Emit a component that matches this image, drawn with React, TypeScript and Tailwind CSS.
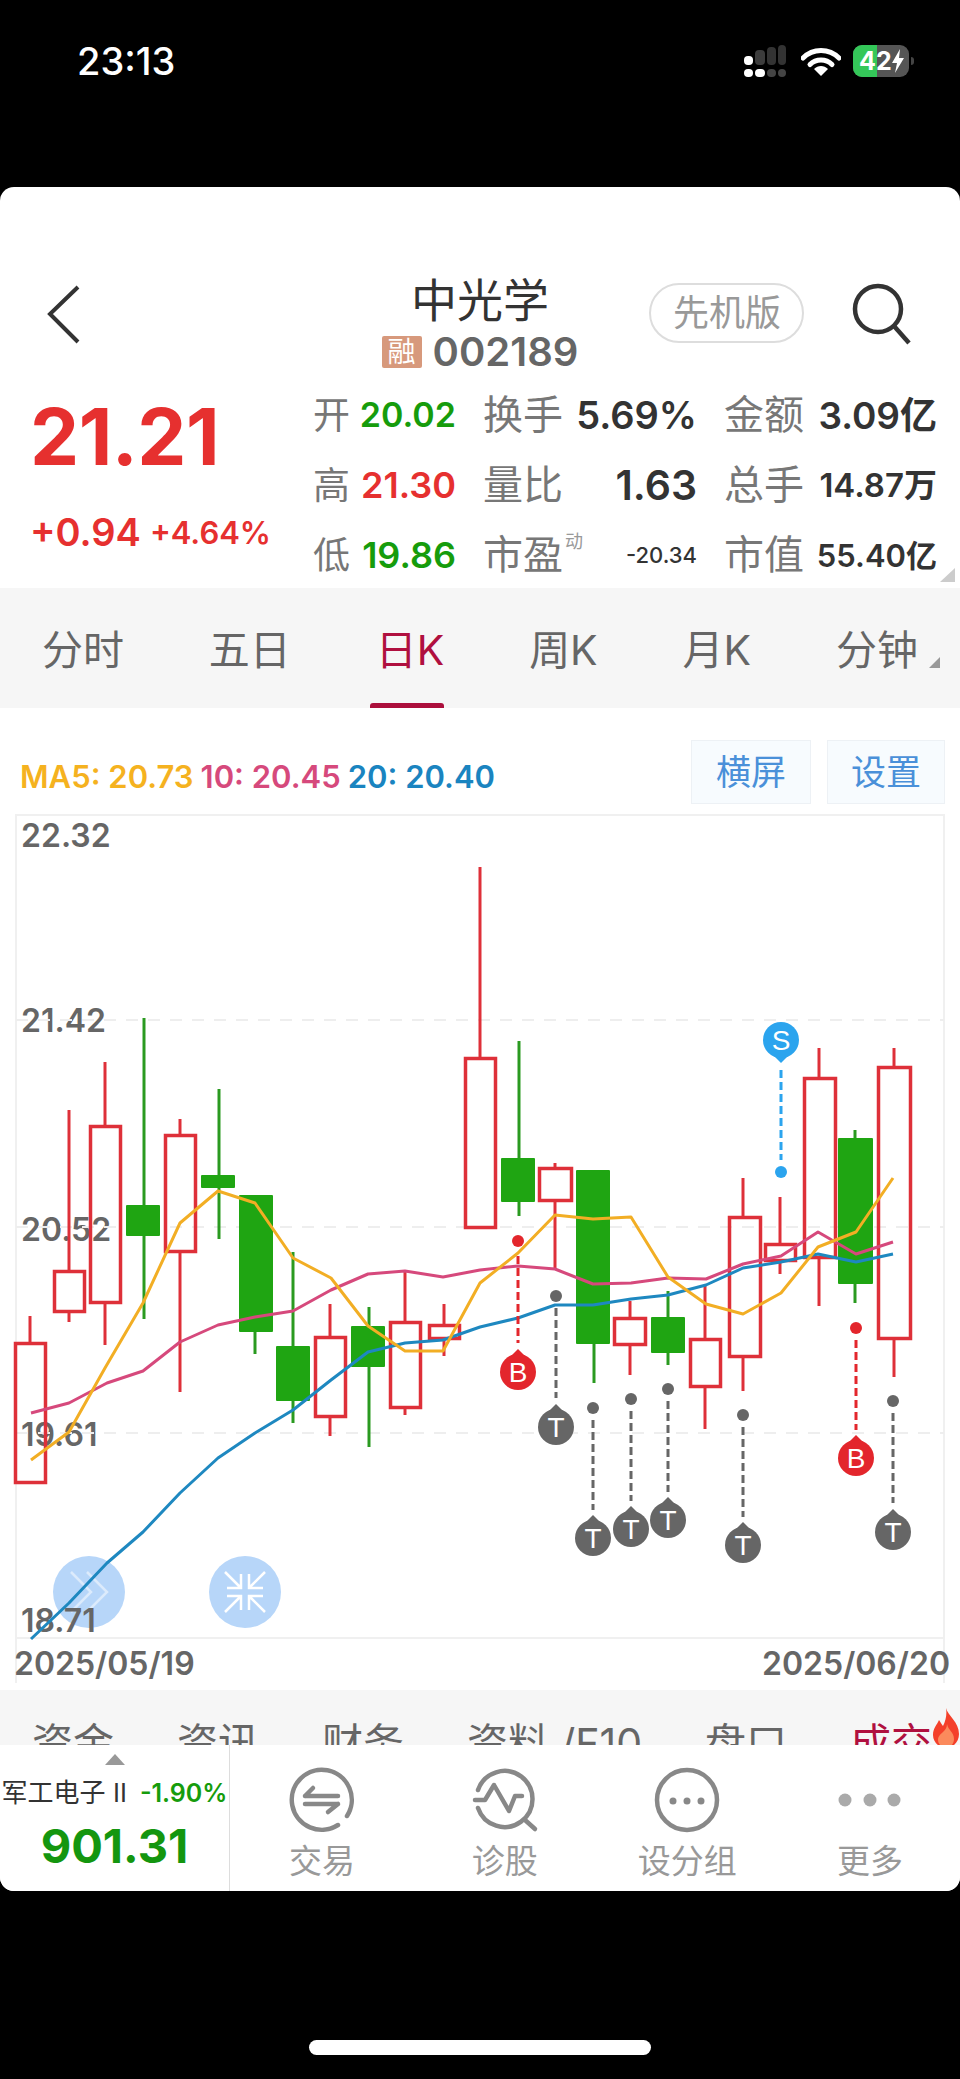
type Candle = [number, number, number, number, number, number, number, 0 | 1];
type Pin = { x: number; dot: number; from: number; to: number; c: number; label: string; color: string };

// cx, wick top, wick bottom, body left, body right, body top, body bottom, 1 = up (hollow red)
const candles: Candle[] = [
  [30, 1316, 1484, 14, 47, 1342, 1484, 1],
  [69, 1110, 1322, 53, 86, 1270, 1313, 1],
  [105, 1062, 1345, 89, 122, 1125, 1304, 1],
  [144, 1018, 1319, 126, 160, 1205, 1236, 0],
  [180, 1119, 1392, 164, 197, 1134, 1253, 1],
  [219, 1089, 1239, 201, 235, 1175, 1188, 0],
  [255, 1195, 1354, 239, 273, 1195, 1332, 0],
  [293, 1252, 1423, 276, 310, 1346, 1401, 0],
  [330, 1304, 1436, 314, 347, 1336, 1418, 1],
  [369, 1307, 1447, 351, 385, 1326, 1367, 0],
  [405, 1271, 1415, 389, 422, 1321, 1409, 1],
  [444, 1304, 1356, 428, 461, 1324, 1340, 1],
  [480, 867, 1229, 464, 497, 1057, 1229, 1],
  [519, 1041, 1216, 501, 535, 1158, 1202, 0],
  [555, 1163, 1268, 538, 573, 1167, 1202, 1],
  [594, 1170, 1383, 576, 610, 1170, 1344, 0],
  [630, 1301, 1375, 613, 647, 1317, 1346, 1],
  [668, 1291, 1365, 651, 685, 1317, 1353, 0],
  [705, 1285, 1429, 689, 722, 1338, 1388, 1],
  [743, 1178, 1391, 728, 762, 1216, 1358, 1],
  [780, 1197, 1274, 764, 797, 1243, 1262, 1],
  [819, 1048, 1306, 803, 837, 1077, 1259, 1],
  [855, 1130, 1303, 838, 873, 1138, 1284, 0],
  [894, 1048, 1377, 877, 912, 1066, 1340, 1],
];

const ma5 = "31,1460 69,1432 105,1368 143,1303 180,1223 218,1191 255,1203 293,1258 331,1278 368,1326 405,1351 443,1351 480,1283 518,1253 555,1215 593,1219 631,1217 668,1277 706,1304 743,1314 781,1293 818,1247 856,1232 893,1178";
const ma10 = "31,1413 69,1403 107,1383 143,1371 180,1342 218,1325 255,1317 293,1311 331,1290 368,1274 405,1271 443,1277 480,1270 518,1266 555,1269 593,1284 631,1283 668,1278 706,1279 743,1264 781,1256 818,1232 856,1254 893,1242";
const ma20 = "31,1639 69,1603 107,1563 143,1532 180,1493 218,1458 255,1433 293,1410 331,1380 368,1352 405,1343 443,1340 480,1327 518,1318 555,1305 593,1305 631,1299 668,1295 706,1285 743,1268 781,1262 818,1254 856,1262 893,1254";

const pins: Pin[] = [
  { x: 518, dot: 1241, from: 1256, to: 1343, c: 1372, label: "B", color: "#e3262c" },
  { x: 556, dot: 1296, from: 1308, to: 1398, c: 1427, label: "T", color: "#666666" },
  { x: 593, dot: 1408, from: 1420, to: 1510, c: 1538, label: "T", color: "#666666" },
  { x: 631, dot: 1399, from: 1411, to: 1501, c: 1529, label: "T", color: "#666666" },
  { x: 668, dot: 1389, from: 1401, to: 1492, c: 1520, label: "T", color: "#666666" },
  { x: 743, dot: 1415, from: 1427, to: 1517, c: 1545, label: "T", color: "#666666" },
  { x: 856, dot: 1328, from: 1340, to: 1430, c: 1458, label: "B", color: "#e3262c" },
  { x: 893, dot: 1401, from: 1413, to: 1503, c: 1532, label: "T", color: "#666666" },
];

const axisLabels = [
  { text: "22.32", cls: "top-[4px]" },
  { text: "21.42", cls: "top-[189px]" },
  { text: "20.52", cls: "top-[398px]" },
  { text: "19.61", cls: "top-[603px]" },
  { text: "18.71", cls: "top-[789px]" },
];

const timeTabs = ["分时", "五日", "日K", "周K", "月K", "分钟"];

function StatusBar() {
  return (
    <div className="flex h-[187px] shrink-0 items-start justify-between pl-[77px] pr-[46px] pt-[45px]">
      <span className="text-[38px] leading-[33px] font-medium text-white">23:13</span>
      <div className="flex items-start">
        <svg width="46" height="34" viewBox="0 0 46 34" className="mr-[11px]">
          <rect x="0" y="11" width="9" height="9" rx="4" fill="#fff" />
          <rect x="11" y="5" width="10" height="15" rx="4" fill="#3c3c3c" />
          <rect x="23" y="2" width="9" height="18" rx="4" fill="#333" />
          <rect x="34" y="0" width="8" height="20" rx="4" fill="#333" />
          <rect x="0" y="24" width="9" height="8" rx="4" fill="#fff" />
          <rect x="11" y="24" width="10" height="8" rx="4" fill="#fff" />
          <rect x="23" y="24" width="9" height="8" rx="4" fill="#444" />
          <rect x="34" y="24" width="8" height="8" rx="4" fill="#444" />
        </svg>
        <svg width="40" height="30" viewBox="0 0 40 30" className="mr-[12px] mt-[2px]">
          <path d="M2 11 C12 1 28 1 38 11" fill="none" stroke="#fff" strokeWidth="5" strokeLinecap="round" />
          <path d="M9 17.5 C15 11.5 25 11.5 31 17.5" fill="none" stroke="#fff" strokeWidth="5" strokeLinecap="round" />
          <path d="M13 22 C17 18 23 18 27 22 L20 29 Z" fill="#fff" />
        </svg>
        <div className="relative flex h-[32px] w-[56px] overflow-hidden rounded-[9px] bg-[#555555]">
          <div className="h-full w-[24px] bg-[#34c759]" />
          <span className="absolute left-[6px] top-[3px] text-[25px] leading-[26px] font-bold text-white">42</span>
          <svg width="14" height="24" viewBox="0 0 14 24" className="absolute right-[4px] top-[4px]">
            <path d="M9 0 L1 14 H6 L4 24 L13 9 H8 Z" fill="#fff" />
          </svg>
        </div>
        <div className="ml-[2px] mt-[12px] h-[8px] w-[3px] rounded-r-sm bg-[#444]" />
      </div>
    </div>
  );
}

function Header() {
  return (
    <div className="grid h-[193px] shrink-0 grid-cols-[1fr_auto_1fr] pt-[90px]">
      <div className="pl-[47px] pt-[8px]">
        <svg width="34" height="60" viewBox="0 0 34 60">
          <path d="M31 2 L3 29 L31 57" fill="none" stroke="#333" strokeWidth="4" />
        </svg>
      </div>
      <div className="flex flex-col items-center">
        <span className="text-[46px] leading-[46px] text-[#333333]">中光学</span>
        <div className="mt-[13px] flex items-center gap-[11px]">
          <span className="flex h-[32px] w-[40px] items-center justify-center rounded-[2px] bg-[#d7997c] text-[28px] leading-none text-white">融</span>
          <span className="text-[40px] leading-[32px] font-semibold text-[#666666]">002189</span>
        </div>
      </div>
      <div className="flex items-start pl-[71px] pt-[6px]">
        <span className="flex h-[60px] w-[155px] items-center justify-center rounded-full border-2 border-[#dddddd] text-[36px] leading-none text-[#999999]">先机版</span>
        <svg width="62" height="62" viewBox="0 0 62 62" className="ml-[47px] shrink-0">
          <circle cx="27" cy="26" r="23" fill="none" stroke="#333" strokeWidth="4.5" />
          <path d="M43 43 L58 60" fill="none" stroke="#333" strokeWidth="4.5" />
        </svg>
      </div>
    </div>
  );
}

function Stat({ label, value, cls, sup }: { label: string; value: string; cls: string; sup?: boolean }) {
  return (
    <div className="flex items-center justify-between">
      <span className="relative text-[40px] leading-none text-[#777777]">
        {label}
        {sup && <span className="absolute left-[82px] top-[-2px] text-[18px] leading-none text-[#999999]">动</span>}
      </span>
      <span className={cls}>{value}</span>
    </div>
  );
}

function Quote() {
  const base = "leading-none font-semibold";
  return (
    <div className="relative flex h-[208px] shrink-0">
      <div className="w-[313px] shrink-0 pl-[30px] pt-[26px]">
        <div className="text-[78px] leading-[62px] font-bold tracking-[-0.5px] text-[#e6302f]">21.21</div>
        <div className="mt-[45px] flex items-center gap-[9px] font-semibold text-[#e6302f]">
          <span className="text-[38px] leading-none">+0.94</span>
          <span className="text-[31px] leading-none">+4.64%</span>
        </div>
      </div>
      <div className="grid h-[210px] w-[625px] grid-cols-[143px_214px_213px] grid-rows-3 gap-x-[27px]">
        <div className="flex items-center justify-between">
          <span className="text-[37px] leading-none text-[#777777]">开</span>
          <span className={`${base} text-[34px] text-[#169c0c]`}>20.02</span>
        </div>
        <Stat label="换手" value="5.69%" cls={`${base} text-[38px] text-[#333333]`} />
        <Stat label="金额" value="3.09亿" cls={`${base} text-[37px] text-[#333333]`} />
        <div className="flex items-center justify-between">
          <span className="text-[37px] leading-none text-[#777777]">高</span>
          <span className={`${base} text-[36px] text-[#e6302f]`}>21.30</span>
        </div>
        <Stat label="量比" value="1.63" cls={`${base} text-[41px] text-[#333333]`} />
        <Stat label="总手" value="14.87万" cls={`${base} text-[33px] text-[#333333]`} />
        <div className="flex items-center justify-between">
          <span className="text-[37px] leading-none text-[#777777]">低</span>
          <span className={`${base} text-[36px] text-[#169c0c]`}>19.86</span>
        </div>
        <Stat label="市盈" value="-20.34" sup cls="text-[22px] leading-none font-medium text-[#333333]" />
        <Stat label="市值" value="55.40亿" cls={`${base} text-[31px] text-[#333333]`} />
      </div>
      <div className="absolute bottom-[6px] right-[5px] h-0 w-0 border-b-[14px] border-l-[15px] border-b-[#cccccc] border-l-transparent" />
    </div>
  );
}

function TimeTabs() {
  return (
    <div className="relative flex h-[120px] shrink-0 items-start justify-between bg-[#f6f6f6] px-[42px] pt-[42px]">
      {timeTabs.map((t) => (
        <span key={t} className={t === "日K" ? "relative text-[41px] leading-none text-[#b0103f]" : "text-[41px] leading-none text-[#666666]"}>
          {t}
          {t === "日K" && <span className="absolute left-[-6px] top-[73px] h-[5px] w-[74px] rounded-t-[3px] bg-[#ac0f3c]" />}
        </span>
      ))}
      <div className="absolute right-[20px] top-[69px] h-0 w-0 border-b-[11px] border-l-[11px] border-b-[#999999] border-l-transparent" />
    </div>
  );
}

function Legend() {
  return (
    <div className="mt-[32px] flex h-[64px] shrink-0 items-center justify-between pl-[20px] pr-[15px]">
      <div className="flex gap-[7px] pt-[8px] text-[31px] leading-none font-semibold">
        <span className="text-[#f5b21f]">MA5: 20.73</span>
        <span className="text-[#d6497c]">10: 20.45</span>
        <span className="text-[#1a84c0]">20: 20.40</span>
      </div>
      <div className="flex gap-[16px]">
        <span className="flex h-[64px] w-[120px] items-center justify-center border border-[#edf1f5] bg-[#f7fbfe] text-[35px] leading-none text-[#4a90d9]">横屏</span>
        <span className="flex h-[64px] w-[118px] items-center justify-center border border-[#edf1f5] bg-[#f7fbfe] text-[35px] leading-none text-[#4a90d9]">设置</span>
      </div>
    </div>
  );
}

function CandleShape({ c }: { c: Candle }) {
  const [cx, wt, wb, l, r, t, b, up] = c;
  const color = up ? "#de3039" : "#1fa512";
  return (
    <g>
      {wt < t && <line x1={cx} x2={cx} y1={wt} y2={t} stroke={up ? color : "#2a9a20"} strokeWidth="3" />}
      {wb > b && <line x1={cx} x2={cx} y1={b} y2={wb} stroke={up ? color : "#2a9a20"} strokeWidth="3" />}
      {up ? (
        <rect x={l + 1.5} y={t + 1.5} width={r - l - 3} height={b - t - 3} fill="none" stroke={color} strokeWidth="3.5" />
      ) : (
        <rect x={l} y={t} width={r - l} height={b - t} rx="1" fill={color} />
      )}
    </g>
  );
}

function PinShape({ p }: { p: Pin }) {
  return (
    <g>
      <circle cx={p.x} cy={p.dot} r="6" fill={p.color} />
      <line x1={p.x} x2={p.x} y1={p.from} y2={p.to} stroke={p.color} strokeWidth="3" strokeDasharray="8 4" />
      <path d={`M${p.x - 7} ${p.c - 16} L${p.x} ${p.c - 23} L${p.x + 7} ${p.c - 16} Z`} fill={p.color} />
      <circle cx={p.x} cy={p.c} r="18" fill={p.color} />
      <text x={p.x} y={p.c + 10} textAnchor="middle" fontSize="28" fill="#fff" fontFamily="Liberation Sans, sans-serif">{p.label}</text>
    </g>
  );
}

function Chart() {
  return (
    <div className="relative ml-[15px] mt-[10px] h-[869px] w-[930px] shrink-0 border-x-2 border-t-2 border-[#f0f0f0]">
      <div className="relative h-[823px] border-b-2 border-[#f0f0f0]">
        <div className="absolute left-[36px] top-[740px] flex h-[72px] w-[72px] items-center justify-center rounded-full bg-[#b7d6f9]">
          <svg width="48" height="48" viewBox="0 0 48 48">
            <path d="M6 4 L26 24 L6 44 M22 4 L42 24 L22 44" fill="none" stroke="#dcebfc" strokeWidth="2.5" />
          </svg>
        </div>
        <div className="absolute left-[192px] top-[740px] flex h-[72px] w-[72px] items-center justify-center rounded-full bg-[#b7d6f9]">
          <svg width="48" height="48" viewBox="0 0 48 48" stroke="#fff" strokeWidth="2.5" fill="none">
            <path d="M4 4 L20 20 M20 6 V20 H6 M44 4 L28 20 M28 6 V20 H42 M4 44 L20 28 M20 42 V28 H6 M44 44 L28 28 M28 42 V28 H42" />
          </svg>
        </div>
        {axisLabels.map((a) => (
          <span key={a.text} className={`absolute left-[4px] text-[32px] leading-none font-semibold text-[#666666] ${a.cls}`}>{a.text}</span>
        ))}
      </div>
      <div className="ml-[-3px] mr-[-7px] flex justify-between pt-[7px] text-[32px] leading-[36px] font-semibold text-[#666666]">
        <span>2025/05/19</span>
        <span>2025/06/20</span>
      </div>
      <svg className="absolute left-[-17px] top-[-2px]" width="960" height="869" viewBox="0 814 960 869" fill="none">
        {[1020, 1227, 1433].map((y) => (
          <line key={y} x1="16" x2="944" y1={y} y2={y} stroke="#eeeeee" strokeWidth="2" strokeDasharray="12 10" />
        ))}
        {candles.map((c) => (
          <CandleShape key={c[0]} c={c} />
        ))}
        <polyline points={ma20} stroke="#1e88c0" strokeWidth="3" strokeLinejoin="round" />
        <polyline points={ma10} stroke="#d6497c" strokeWidth="3" strokeLinejoin="round" />
        <polyline points={ma5} stroke="#f2ae24" strokeWidth="3" strokeLinejoin="round" />
        {pins.map((p) => (
          <PinShape key={p.x} p={p} />
        ))}
        <circle cx="781" cy="1172" r="6" fill="#2ba4ee" />
        <line x1="781" x2="781" y1="1070" y2="1160" stroke="#2ba4ee" strokeWidth="3" strokeDasharray="8 4" />
        <path d="M774 1056 L781 1063 L788 1056 Z" fill="#2ba4ee" />
        <circle cx="781" cy="1040" r="18" fill="#2ba4ee" />
        <text x="781" y="1050" textAnchor="middle" fontSize="28" fill="#fff" fontFamily="Liberation Sans, sans-serif">S</text>
      </svg>
    </div>
  );
}

function InfoTabs() {
  return (
    <div className="mt-[7px] flex h-[55px] shrink-0 justify-between overflow-hidden bg-[#f6f6f6] pl-[32px] pt-[30px] text-[41px] leading-[46px] text-[#666666]">
      <span>资金</span>
      <span>资讯</span>
      <span>财务</span>
      <span>资料 /F10</span>
      <span>盘口</span>
      <span className="flex items-start text-[#b0103f]">
        成交
        <svg width="28" height="40" viewBox="0 0 28 40" className="mt-[-12px] shrink-0">
          <path d="M14 0 C16 8 27 14 27 26 C27 34 21 40 14 40 C7 40 1 34 1 27 C1 20 5 17 7 12 C9 15 10 17 11 18 C14 12 15 6 14 0Z" fill="#f4402a" />
          <path d="M15 16 C16 22 22 24 22 31 C22 36 18 40 14 40 C10 40 6 36 6 32 C6 28 9 26 11 24 C13 22 15 20 15 16Z" fill="#fb8a5c" />
        </svg>
      </span>
    </div>
  );
}

function NavItem({ label, children }: { label: string; children: React.ReactNode }) {
  return (
    <div className="flex w-[138px] flex-col items-center">
      <div className="flex h-[68px] w-[72px] items-center justify-center">{children}</div>
      <span className="mt-[11px] text-[33px] leading-none text-[#999999]">{label}</span>
    </div>
  );
}

function BottomBar() {
  return (
    <div className="flex h-[146px] shrink-0 overflow-hidden rounded-b-[14px] bg-white">
      <div className="flex w-[230px] shrink-0 flex-col items-center border-r border-[#dddddd] pt-[9px]">
        <div className="h-0 w-0 border-x-[10px] border-b-[11px] border-x-transparent border-b-[#999999]" />
        <div className="mt-[15px] flex items-center whitespace-nowrap text-[26px] leading-none">
          <span className="text-[#333333]">军工电子 Ⅱ</span>
          <span className="ml-[13px] text-[25px] font-semibold text-[#169c0c]">-1.90%</span>
        </div>
        <div className="mt-[18px] text-[47px] leading-[44px] font-bold text-[#14960f]">901.31</div>
      </div>
      <div className="flex flex-1 items-start justify-between pl-[23px] pr-[21px] pt-[21px]">
        <NavItem label="交易">
          <svg width="68" height="68" viewBox="0 0 68 68" fill="none" stroke="#888" strokeWidth="4.5" strokeLinecap="round">
            <path d="M59 50 A30 30 0 1 0 50 59" />
            <path d="M17 30 H50 M17 30 L25 22 M17 38 H50 M50 38 L40 46" />
          </svg>
        </NavItem>
        <NavItem label="诊股">
          <svg width="68" height="68" viewBox="0 0 68 68" fill="none" stroke="#888" strokeWidth="4.5" strokeLinecap="round" strokeLinejoin="round">
            <path d="M7 24 A28 28 0 1 1 7 42" />
            <path d="M4 34 H14 L23 19 L38 45 L44 30 H51" />
            <path d="M54 54 L64 63" />
          </svg>
        </NavItem>
        <NavItem label="设分组">
          <svg width="68" height="68" viewBox="0 0 68 68" fill="none">
            <circle cx="34" cy="34" r="30" stroke="#888" strokeWidth="4.5" />
            <circle cx="20" cy="35" r="3.5" fill="#888" />
            <circle cx="34" cy="35" r="3.5" fill="#888" />
            <circle cx="48" cy="35" r="3.5" fill="#888" />
          </svg>
        </NavItem>
        <NavItem label="更多">
          <svg width="68" height="68" viewBox="0 0 68 68" fill="#aaaaaa">
            <circle cx="9" cy="34" r="6.5" />
            <circle cx="34" cy="34" r="6.5" />
            <circle cx="58" cy="34" r="6.5" />
          </svg>
        </NavItem>
      </div>
    </div>
  );
}

export default function App() {
  return (
    <div className="flex h-[2079px] w-[960px] flex-col bg-black font-['Inter','Noto_Sans_CJK_SC',sans-serif]">
      <StatusBar />
      <div className="flex h-[1704px] shrink-0 flex-col rounded-[14px] bg-white">
        <Header />
        <Quote />
        <TimeTabs />
        <Legend />
        <Chart />
        <InfoTabs />
        <BottomBar />
      </div>
      <div className="mx-auto mt-[149px] h-[15px] w-[342px] shrink-0 rounded-full bg-white" />
    </div>
  );
}
